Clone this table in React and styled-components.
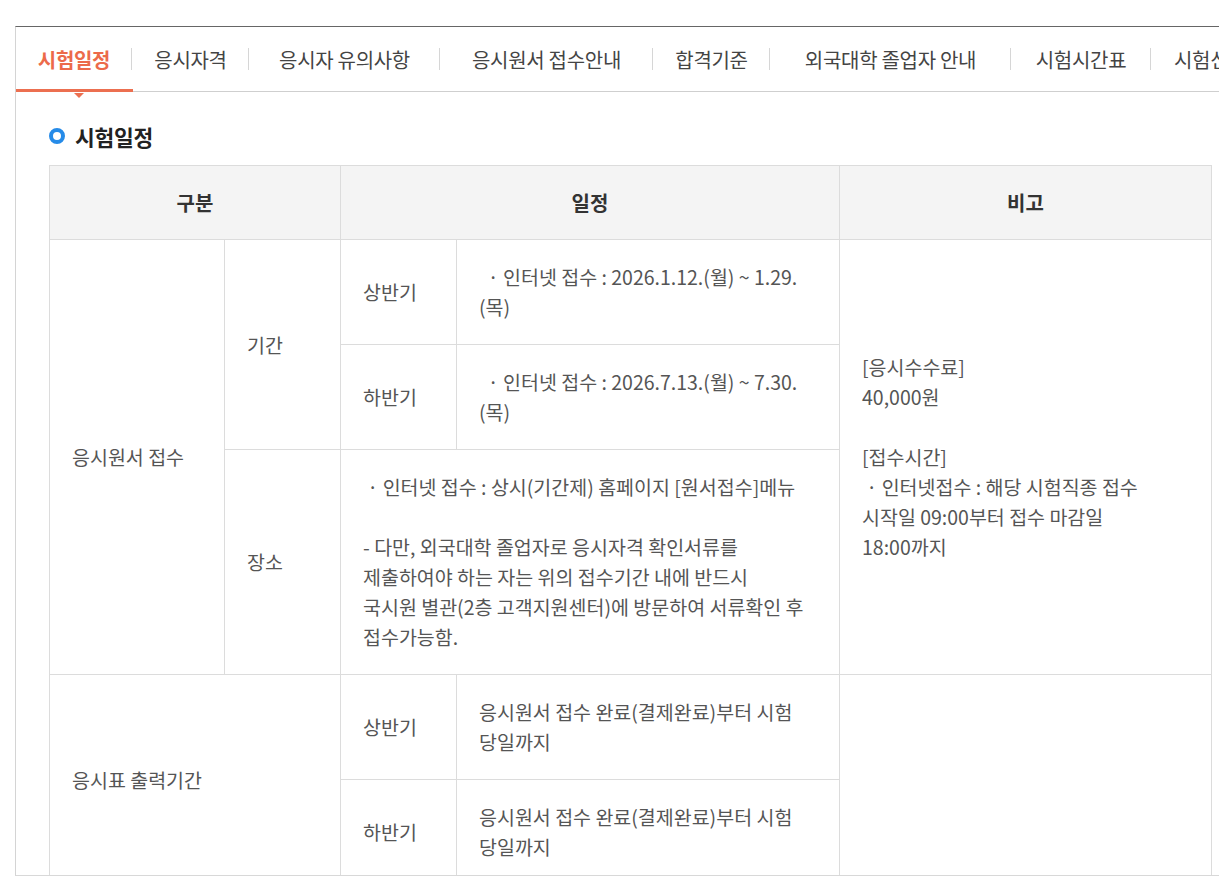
import React from "react";
import styled, { createGlobalStyle } from "styled-components";

const GlobalStyle = createGlobalStyle`
  html, body { margin: 0; padding: 0; background: #fff; overflow: hidden; }
  body { font-family: "Noto Sans CJK KR", "Noto Sans", sans-serif; }
  * { box-sizing: border-box; }
`;

const Page = styled.div`
  width: 1219px;
  height: 888px;
  overflow: hidden;
  padding: 26px 0 0 15px;
`;

const Panel = styled.section`
  width: 1240px;
  height: 850px;
  overflow: hidden;
  border-top: 1px solid #666;
  border-left: 1px solid #d4d4d4;
  border-bottom: 1px solid #d8d8d8;
`;

const TabBar = styled.ul`
  display: flex;
  margin: 0;
  padding: 0;
  list-style: none;
  height: 65px;
  border-bottom: 1px solid #cfcfcf;
`;

const Tab = styled.li`
  position: relative;
  flex: none;
  width: ${(p) => (p.$w ? `${p.$w}px` : "auto")};
  padding: ${(p) => (p.$w ? "0" : "0 23px")};
  height: 64px;
  display: flex;
  align-items: center;
  justify-content: center;
  white-space: nowrap;
  font-size: 20px;
  letter-spacing: -0.3px;
  color: ${(p) => (p.$active ? "#ec6a4a" : "#444")};
  font-weight: ${(p) => (p.$active ? 700 : 400)};

  &::after {
    content: "";
    display: ${(p) => (p.$last ? "none" : "block")};
    position: absolute;
    right: 0;
    top: 21px;
    width: 1px;
    height: 22px;
    background: #d6d6d6;
  }

  &::before {
    content: "";
    display: ${(p) => (p.$active ? "block" : "none")};
    position: absolute;
    left: 0;
    right: -1px;
    bottom: -1px;
    height: 3px;
    background: #ec6f50;
  }
`;

const Caret = styled.span`
  position: absolute;
  left: 58px;
  bottom: -7px;
  width: 0;
  height: 0;
  border-left: 5px solid transparent;
  border-right: 5px solid transparent;
  border-top: 5px solid #ec6f50;
`;

const Content = styled.div`
  padding: 29px 33px 0 33px;
`;

const Heading = styled.h3`
  display: flex;
  align-items: center;
  gap: 10px;
  margin: 0 0 14px 0;
  height: 30px;
  font-size: 21.5px;
  font-weight: 700;
  letter-spacing: -0.3px;
  color: #222;
`;

const Ring = styled.span`
  width: 16px;
  height: 16px;
  border-radius: 50%;
  border: 4px solid #268be8;
  flex: none;
`;

const Table = styled.table`
  width: 1162px;
  table-layout: fixed;
  border-collapse: collapse;
  font-size: 19.5px;
`;

const Th = styled.th`
  height: 74px;
  background: #f4f4f4;
  border: 1px solid #dcdcdc;
  color: #333;
  font-weight: 700;
  font-size: 20px;
  text-align: center;
  vertical-align: middle;
`;

const Td = styled.td`
  border: 1px solid #dcdcdc;
  padding: 22px 22px;
  line-height: 30px;
  color: #555;
  text-align: left;
  vertical-align: middle;
  word-break: keep-all;
  white-space: nowrap;
`;

const tabs = [
  { label: "시험일정", w: 116, active: true },
  { label: "응시자격", w: 117 },
  { label: "응시자 유의사항", w: 191 },
  { label: "응시원서 접수안내", w: 213 },
  { label: "합격기준", w: 117 },
  { label: "외국대학 졸업자 안내", w: 241 },
  { label: "시험시간표", w: 140 },
  { label: "시험신청 현황", last: true },
];

export default function App() {
  return (
    <>
      <GlobalStyle />
      <Page>
        <Panel>
          <TabBar>
            {tabs.map((t) => (
              <Tab key={t.label} $w={t.w} $active={t.active} $last={t.last}>
                {t.label}
                {t.active && <Caret />}
              </Tab>
            ))}
          </TabBar>
          <Content>
            <Heading>
              <Ring />
              시험일정
            </Heading>
            <Table>
              <colgroup>
                <col style={{ width: 175 }} />
                <col style={{ width: 116 }} />
                <col style={{ width: 116 }} />
                <col style={{ width: 383 }} />
                <col style={{ width: 372 }} />
              </colgroup>
              <thead>
                <tr>
                  <Th colSpan={2}>구분</Th>
                  <Th colSpan={2}>일정</Th>
                  <Th>비고</Th>
                </tr>
              </thead>
              <tbody>
                <tr>
                  <Td rowSpan={3}>응시원서 접수</Td>
                  <Td rowSpan={2}>기간</Td>
                  <Td>상반기</Td>
                  <Td>
                    &nbsp;&nbsp;· 인터넷 접수 : 2026.1.12.(월) ~ 1.29.
                    <br />
                    (목)
                  </Td>
                  <Td rowSpan={3}>
                    [응시수수료]
                    <br />
                    40,000원
                    <br />
                    <br />
                    [접수시간]
                    <br />
                    &nbsp;· 인터넷접수 : 해당 시험직종 접수
                    <br />
                    시작일 09:00부터 접수 마감일
                    <br />
                    18:00까지
                  </Td>
                </tr>
                <tr>
                  <Td>하반기</Td>
                  <Td>
                    &nbsp;&nbsp;· 인터넷 접수 : 2026.7.13.(월) ~ 7.30.
                    <br />
                    (목)
                  </Td>
                </tr>
                <tr>
                  <Td>장소</Td>
                  <Td colSpan={2}>
                    &nbsp;· 인터넷 접수 : 상시(기간제) 홈페이지 [원서접수]메뉴
                    <br />
                    <br />
                    - 다만, 외국대학 졸업자로 응시자격 확인서류를
                    <br />
                    제출하여야 하는 자는 위의 접수기간 내에 반드시
                    <br />
                    국시원 별관(2층 고객지원센터)에 방문하여 서류확인 후
                    <br />
                    접수가능함.
                  </Td>
                </tr>
                <tr>
                  <Td rowSpan={2} colSpan={2}>
                    응시표 출력기간
                  </Td>
                  <Td>상반기</Td>
                  <Td>
                    응시원서 접수 완료(결제완료)부터 시험
                    <br />
                    당일까지
                  </Td>
                  <Td rowSpan={2}></Td>
                </tr>
                <tr>
                  <Td>하반기</Td>
                  <Td>
                    응시원서 접수 완료(결제완료)부터 시험
                    <br />
                    당일까지
                  </Td>
                </tr>
              </tbody>
            </Table>
          </Content>
        </Panel>
      </Page>
    </>
  );
}
